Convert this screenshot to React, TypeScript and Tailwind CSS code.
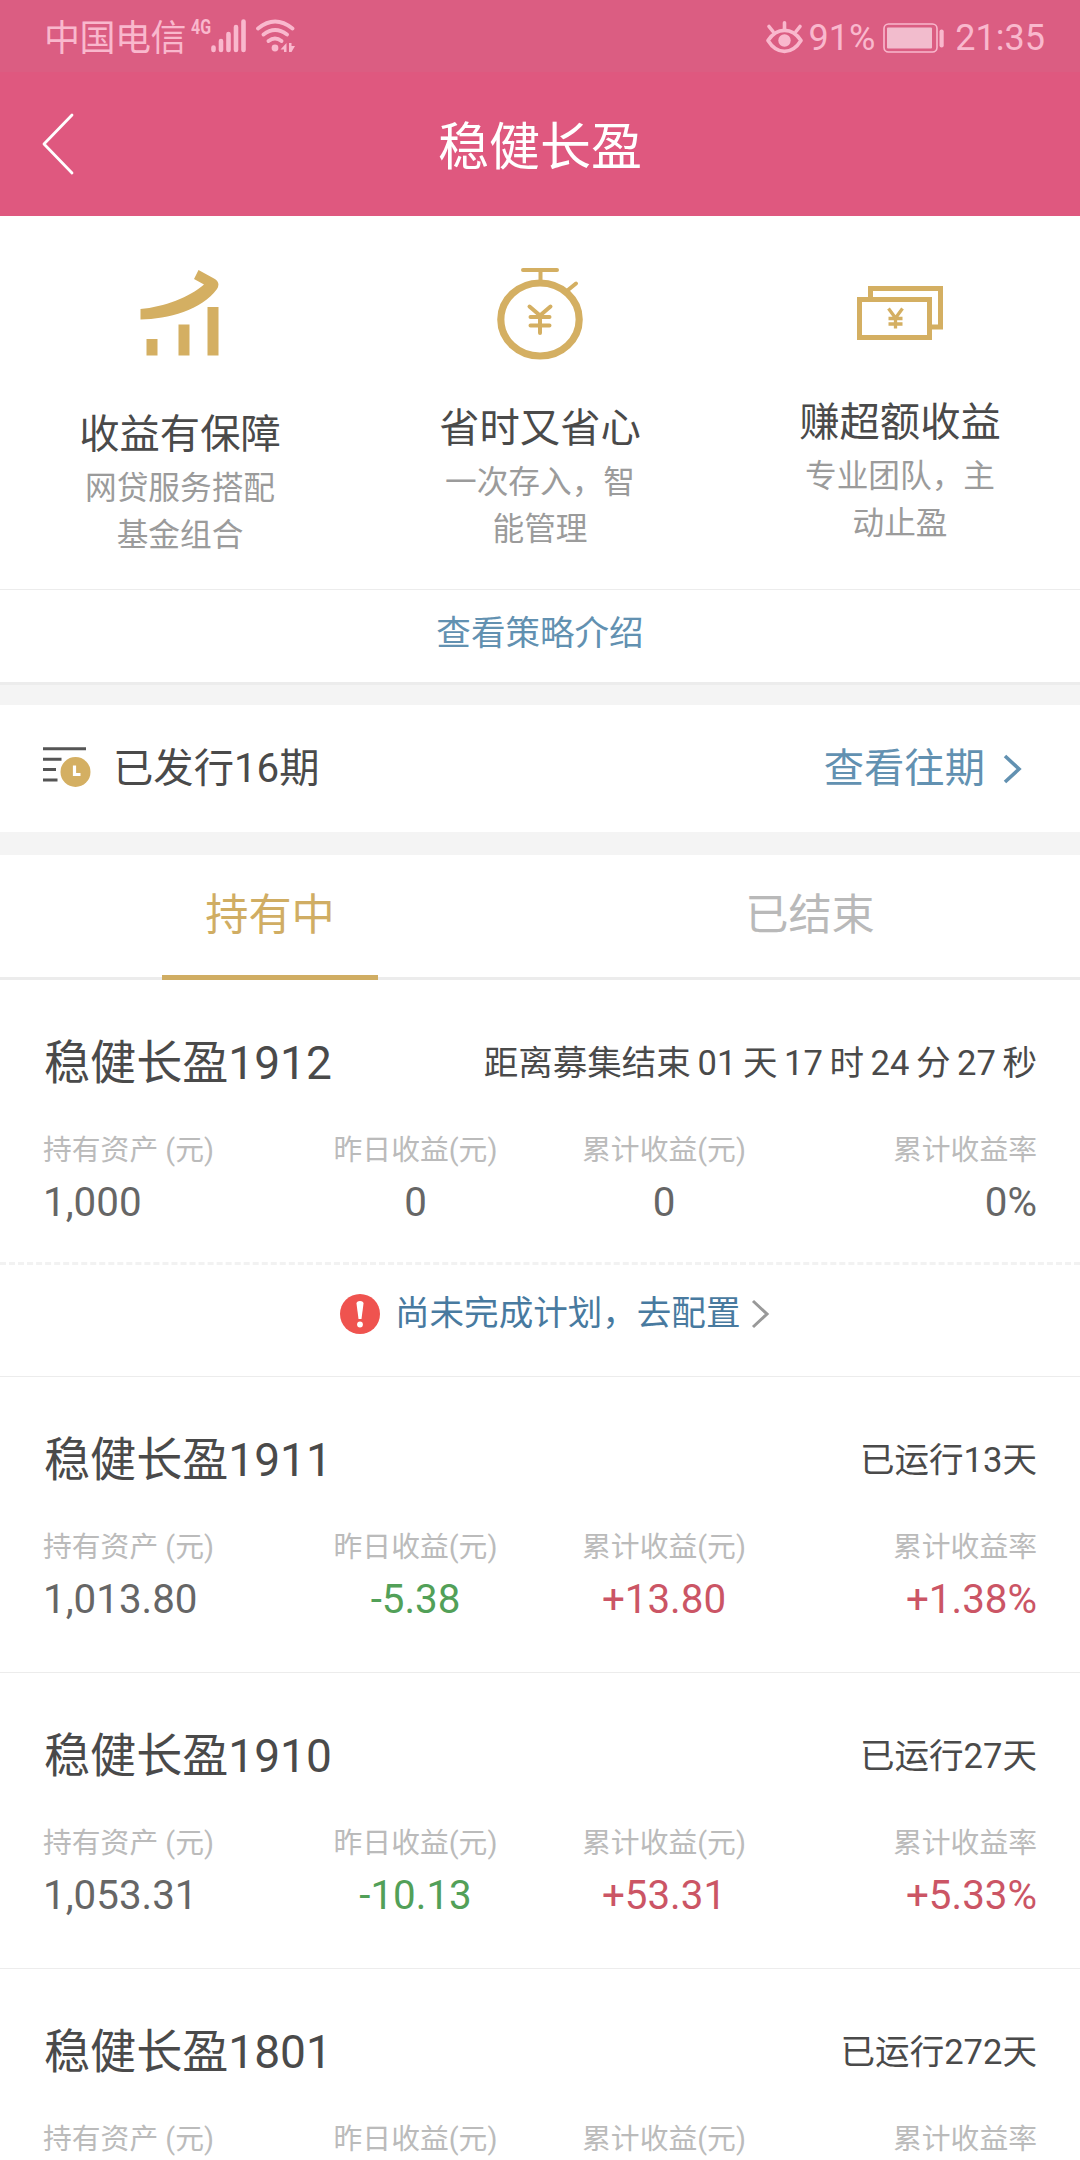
import type { ReactNode } from "react";

type Tone = "normal" | "up" | "down";

interface Plan {
  name: string;
  status: string;
  values: { text: string; tone: Tone }[];
  pending?: boolean;
}

const plans: Plan[] = [
  {
    name: "稳健长盈1912",
    status: "距离募集结束 01 天 17 时 24 分 27 秒",
    values: [
      { text: "1,000", tone: "normal" },
      { text: "0", tone: "normal" },
      { text: "0", tone: "normal" },
      { text: "0%", tone: "normal" },
    ],
    pending: true,
  },
  {
    name: "稳健长盈1911",
    status: "已运行13天",
    values: [
      { text: "1,013.80", tone: "normal" },
      { text: "-5.38", tone: "down" },
      { text: "+13.80", tone: "up" },
      { text: "+1.38%", tone: "up" },
    ],
  },
  {
    name: "稳健长盈1910",
    status: "已运行27天",
    values: [
      { text: "1,053.31", tone: "normal" },
      { text: "-10.13", tone: "down" },
      { text: "+53.31", tone: "up" },
      { text: "+5.33%", tone: "up" },
    ],
  },
  {
    name: "稳健长盈1801",
    status: "已运行272天",
    values: [
      { text: "", tone: "normal" },
      { text: "", tone: "normal" },
      { text: "", tone: "normal" },
      { text: "", tone: "normal" },
    ],
  },
];

const labels = ["持有资产 (元)", "昨日收益(元)", "累计收益(元)", "累计收益率"];

const toneClass: Record<Tone, string> = {
  normal: "text-[#666666]",
  up: "text-[#cb5565]",
  down: "text-[#52a058]",
};

const columnClass = [
  "w-[251px] text-left",
  "w-[243px] text-center",
  "w-[254px] text-center",
  "flex-1 text-right",
];

function StatusBar() {
  return (
    <div className="flex h-[72px] items-center justify-between bg-[#db5d82] pt-1 pr-[35px] pl-11 text-[36px] leading-none text-[#f9b8cd]">
      <div className="flex items-center">
        <span className="pt-0.5 tracking-[-0.5px]">中国电信</span>
        <span className="mb-[22px] ml-[5px] inline-block w-[19px] origin-left scale-x-[0.76] text-[21px] leading-none font-bold">4G</span>
        <svg className="-mt-1" width="88" height="36" viewBox="209 18 88 36" fill="none">
          <path d="M212.500 47.500V50M220 41V50M227.500 34V50M235 27V50M242.500 21.500V50" stroke="#f9b8cd" strokeWidth="4.600" strokeLinecap="round" />
          <path d="M257 28.500Q274 14.500 291.500 28.500M262.500 34.500Q274 25.500 286 34.500M267.500 41Q274 36 280.500 41" stroke="#f9b8cd" strokeWidth="3.800" strokeLinecap="round" />
          <circle cx="274" cy="48" r="3.400" fill="#f9b8cd" />
          <path d="M279.500 49.500L285.500 43V52H283V49.500ZM288 43H290.500V46H294L290.500 52H288Z" fill="#f9b8cd" />
        </svg>
      </div>
      <div className="flex items-center">
        <svg className="mr-1.5" width="37" height="34" viewBox="0 0 37 34" fill="none" stroke="#f9b8cd" strokeWidth="3.600" strokeLinecap="round">
          <path d="M2 19.500C11 6 26 6 35 19.500C26 34 11 34 2 19.500Z" strokeLinejoin="round" />
          <path d="M18.500 8V1.800M7 10.500L3 5.500M30 10.500L34 5.500" />
          <circle cx="18.500" cy="19.500" r="6.200" fill="#f9b8cd" stroke="none" />
        </svg>
        <span>91%</span>
        <svg className="mr-[9px] ml-2" width="63" height="30" viewBox="0 0 63 30" fill="none">
          <rect x="1" y="1" width="53" height="28" rx="4.500" stroke="#f9b8cd" strokeWidth="1.600" />
          <rect x="4" y="4.500" width="45" height="21" rx="1" fill="#f2bccd" />
          <rect x="56.500" y="6.500" width="4.200" height="18" rx="2" fill="#f9b8cd" />
        </svg>
        <span>21:35</span>
      </div>
    </div>
  );
}

function GrowthIcon() {
  return (
    <svg width="80" height="86" viewBox="0 0 80 86" fill="#d4af62">
      <path d="M0.500 39C24 37 50 27 64 14.500L54 9L58.500 0L74 8.500Q81 12.500 77 19C62 40 28 49 0.500 49.500Z" />
      <path d="M6.500 69h11v16.500H6.500zM38.500 54.500h11v31H38.500zM67.500 37h11v48.500H67.500z" />
    </svg>
  );
}

function StopwatchIcon() {
  return (
    <svg width="86" height="92" viewBox="0 0 86 92" fill="none" stroke="#d4af62">
      <ellipse cx="43" cy="51.500" rx="39.200" ry="36.500" strokeWidth="7.200" />
      <path d="M26 2H60M43.500 2V14M71 22L79 15.500" strokeWidth="4" strokeLinecap="round" />
      <path d="M32.500 38.500L43 47.500L53.500 38.500M43 47.500V65M33.500 49H52.500M33.500 57.500H52.500" strokeWidth="4" strokeLinecap="round" strokeLinejoin="round" />
    </svg>
  );
}

function BanknoteIcon() {
  return (
    <svg width="86" height="54" viewBox="0 0 86 54" fill="none" stroke="#d4af62">
      <path d="M13.500 11V2.500H83.500V41H75" strokeWidth="5" />
      <rect x="2.500" y="13.500" width="70" height="38" strokeWidth="5" />
      <path d="M31.500 22.500L38.500 32L45.500 22.500M38.500 32V42.500M31.500 32.500H45.500M31.500 38H45.500" strokeWidth="3.300" />
    </svg>
  );
}

function IssuedIcon() {
  return (
    <svg className="-mt-0.5" width="49" height="42" viewBox="0 0 49 42" fill="none">
      <path d="M0 1.800H43M0 12.200H18.500M0 22.500H13M0 33H14.500" stroke="#555555" strokeWidth="2.900" />
      <circle cx="32.500" cy="25" r="15" fill="#d4af62" />
      <path d="M31.500 18.500V27.500H37.500" stroke="#fff" strokeWidth="3.200" />
    </svg>
  );
}

function AlertIcon() {
  return (
    <svg width="40" height="40" viewBox="0 0 40 40">
      <circle cx="20" cy="20" r="20" fill="#ef534f" />
      <path d="M16.500 9.500Q16.500 7 20 7Q23.500 7 23.500 9.500L21.500 25H18.500Z" fill="#fff" />
      <circle cx="20" cy="30.500" r="2.900" fill="#fff" />
    </svg>
  );
}

function Chevron({ className }: { className: string }) {
  return (
    <svg className={className} width="19" height="30" viewBox="0 0 19 30" fill="none" stroke="currentColor">
      <path d="M2 2L16 15L2 28" />
    </svg>
  );
}

function Feature({ icon, title, lines, className }: { icon: ReactNode; title: string; lines: string[]; className: string }) {
  return (
    <div className="flex flex-1 flex-col items-center">
      <div className={className}>{icon}</div>
      <h2 className="text-[40.32px] leading-[60px] text-[#4a4a4a]">{title}</h2>
      <p className="text-center text-[31.68px] leading-[47px] text-[#9b9b9b]">
        {lines[0]}
        <br />
        {lines[1]}
      </p>
    </div>
  );
}

function PlanCard({ plan }: { plan: Plan }) {
  return (
    <section className="border-b border-[#ececec]">
      <div className="h-[282px] px-[43px] pt-[49px]">
        <div className="flex h-[70px] items-center justify-between text-[#4a4a4a]">
          <h3 className="pl-px text-[46.08px]">{plan.name}</h3>
          <span className="text-[34.56px] [word-spacing:-2px]">{plan.status}</span>
        </div>
        <div className="mt-[29px] flex">
          {plan.values.map((value, i) => (
            <div key={i} className={columnClass[i]}>
              <div className="text-[28.8px] leading-[44px] whitespace-nowrap text-[#bbbbbb]">{labels[i]}</div>
              <div className={`mt-[3px] text-[40.32px] leading-[56px] ${toneClass[value.tone]}`}>{value.text}</div>
            </div>
          ))}
        </div>
      </div>
      {plan.pending ? (
        <a className="flex h-[114px] items-center border-t-[3px] border-dashed border-[#f2f2f2] pb-3.5 pl-[340px]">
          <AlertIcon />
          <span className="ml-[15px] text-[34.56px] text-[#487a9f]">尚未完成计划，去配置</span>
          <Chevron className="ml-[11px] stroke-[3] text-[#999999]" />
        </a>
      ) : (
        <div className="h-[13px]" />
      )}
    </section>
  );
}

export default function App() {
  return (
    <div className="h-[2160px] w-[1080px] overflow-hidden bg-white font-[Roboto,'Noto_Sans_CJK_SC',sans-serif]">
      <StatusBar />
      <header className="flex h-36 items-center bg-[#df587f] text-white">
        <div className="flex w-[140px] pl-[42px]">
          <svg width="33" height="62" viewBox="0 0 33 62" fill="none" stroke="#fff" strokeWidth="2.800" strokeLinecap="round" strokeLinejoin="round">
            <path d="M30 2L2 31L30 60" />
          </svg>
        </div>
        <h1 className="flex-1 pt-1.5 text-center text-[51px] leading-none">稳健长盈</h1>
        <div className="w-[140px]" />
      </header>

      <div className="flex h-[373px] pt-10">
        <Feature icon={<GrowthIcon />} title="收益有保障" lines={["网贷服务搭配", "基金组合"]} className="h-[149px] pt-3.5" />
        <Feature icon={<StopwatchIcon />} title="省时又省心" lines={["一次存入，智", "能管理"]} className="h-[143px] pt-3" />
        <Feature icon={<BanknoteIcon />} title="赚超额收益" lines={["专业团队，主", "动止盈"]} className="h-[137px] pt-[30px]" />
      </div>
      <a className="flex h-[96px] items-center justify-center border-y border-b-[3px] border-[#ececec] pb-[5px] text-[34.56px] text-[#6291b1]">
        查看策略介绍
      </a>
      <div className="h-5 bg-[#f4f4f4]" />

      <div className="flex h-[127px] items-center pr-[58px] pl-[43px] text-[40.32px]">
        <IssuedIcon />
        <span className="ml-[21px] pt-0.5 text-[#4a4a4a]">已发行16期</span>
        <a className="ml-auto flex items-center text-[#6291b1]">
          <span className="pt-0.5">查看往期</span>
          <Chevron className="ml-[18px] stroke-[3.6]" />
        </a>
      </div>
      <div className="h-[23px] bg-[#f4f4f4]" />

      <div className="flex h-[125px] border-b-[3px] border-[#ececec] text-center text-[43.2px] leading-[122px]">
        <div className="flex-1 text-[#d0ad63]">
          持有中
          <div className="mx-auto -mt-0.5 h-[5px] w-[216px] bg-[#d0ad63]" />
        </div>
        <div className="flex-1 text-[#b9b9b9]">已结束</div>
      </div>

      {plans.map((plan) => (
        <PlanCard key={plan.name} plan={plan} />
      ))}
    </div>
  );
}
